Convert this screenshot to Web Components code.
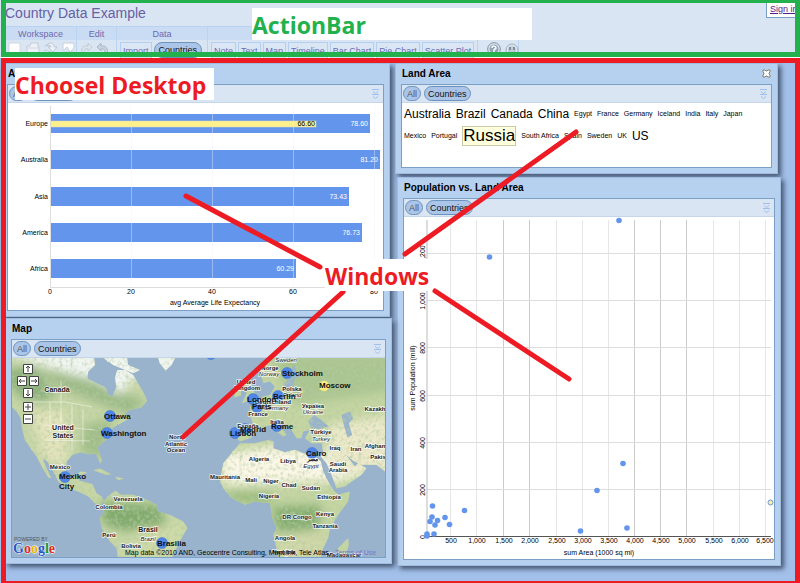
<!DOCTYPE html>
<html lang="en">
<head>
<meta charset="utf-8">
<title>Country Data Example</title>
<style>
html,body{height:100%}
body{margin:0;overflow:hidden;background:#fff;color:#000;font-family:"Liberation Sans",Arial,sans-serif;font-size:9px}
</style>
</head>
<body>
<choosel-app></choosel-app>
<script>
const define=(name,html,setup)=>{
  const t=document.createElement('template');
  t.innerHTML=html;
  customElements.define(name,class extends HTMLElement{
    constructor(){super();this.attachShadow({mode:'open'}).append(t.content.cloneNode(true));}
    connectedCallback(){if(setup&&!this.ready){this.ready=true;setup(this,this.shadowRoot);}}
  });
};

define('marked-region',`
<style>
:host{display:block;position:relative;overflow:hidden;--ink:#ed1c24}
.frame{position:absolute;inset:0 0 -3px 1px;border:5px solid var(--ink);pointer-events:none;z-index:5}
:host([cut=top]) .frame{inset:-2px 0 1px 1px}
</style><slot></slot><div class="frame"></div>`);

define('tool-button',`
<style>
:host{display:block}
button{display:block;font:inherit;color:#6b6bb5;background:#dbe6f5;border:1px solid #b5cff0;padding:0 2px;height:18px;line-height:14px;white-space:nowrap}
:host([pill]) button{border:1px solid #6c93bd;border-radius:9px;background:#abc5e8;color:#111;padding:0 4px;height:16px}
</style><button type="button"><slot></slot></button>`);

define('tool-group',`
<style>
:host{display:flex;flex-direction:column;border-right:1px solid #b9d3f3;box-sizing:border-box}
.head{background:#c9dcf4;height:14px;line-height:14px;text-align:center;color:#6f68ad;border-top:1px solid #b9d3f3;box-sizing:border-box}
.row{display:flex;align-items:flex-start;gap:2px;padding:2px 3px;height:17px;box-sizing:border-box}
:host([wide]) .row{gap:4px}
:host([plain]) .head{background:none;border-color:transparent}
:host([plain]) .row{padding-left:9px}
</style><div class="head"></div><div class="row"><slot></slot></div>`,(h,r)=>{r.querySelector('.head').textContent=h.getAttribute('label')||'';});

const icons={
 doc:'<path d="M1 1h11v14H1z" fill="#fff" stroke="#d0d8e2"/>',
 folder:'<path d="M1 4h3l1-3h7v4h1v8H1z" fill="#eef2f6" stroke="#c3ccd6"/><path d="M2 6h10" stroke="#cfd6de"/>',
 save:'<path d="M1 4l5-3c4 0 4 3 4 4h3L9 10 4 5h3c0-2-1-2-6-1zM1 8l11 4v2H1z" fill="#eef2f6" stroke="#bfc9d5"/>',
 saveas:'<path d="M1 1h11v5L8 10 5 5 1 9z" fill="#fafcfd" stroke="#c7d0da"/><path d="M2 10h11v4H2z" fill="#f4f7fa" stroke="#c7d0da"/>',
 redo:'<path d="M2 13C0 6 4 3 8 4V1l4 4-4 4V7C5 6 4 8 4 12z" fill="#dde4ec" stroke="#c1cbd7"/>',
 undo:'<path d="M11 13c2-7-2-10-6-9V1L1 5l4 4V7c3-1 4 1 4 5z" fill="#c9d2dd" stroke="#acb8c6"/>',
 help:'<circle cx="7" cy="7" r="6.300" fill="#e3eaf2" stroke="#7f8ea0"/><circle cx="7" cy="7" r="4.600" fill="#93a3b8"/><path d="M5 6c0-3 4-2 4 0 0 1-2 1-2 2v2" fill="none" stroke="#fff" stroke-width="1.500"/>',
 bug:'<circle cx="7" cy="8" r="6" fill="#dfe5ec" stroke="#a3afbd"/><circle cx="7" cy="8" r="4" fill="#c3ccd8"/><path d="M5 5v3M9 5v3M4 10q3 2 6 0" fill="none" stroke="#6d7a8b" stroke-width="1.500"/>',
 close:'<path d="M1 1h2l1 1h1l1-1h2v2L7 4v1l1 1v2H6L5 7H4L3 8H1V6l1-1V4L1 3z" fill="#fff" stroke="#81806f"/>',
 down:'<path d="M1 .5h7M2 2.500L4.500 4.500l2.500-2M1 5.500h7M2 7.500L4.500 9.500l2.500-2" fill="none" stroke="#9dbfec"/>'
};
define('tool-icon',`
<style>:host{display:block}button{display:block;padding:0;border:0;background:none;width:14px;height:15px}svg{display:block;width:14px;height:15px}
:host([small]) button,:host([small]) svg{width:9px;height:10px}</style><button type="button"></button>`,(h,r)=>{
  const b=r.querySelector('button'),s=h.hasAttribute('small');
  b.setAttribute('aria-label',h.getAttribute('name'));
  b.innerHTML='<svg viewBox="0 0 '+(s?'9 10':'14 15')+'">'+icons[h.getAttribute('name')]+'</svg>';
});

define('action-bar',`
<style>
:host{display:flex;flex-direction:column;background:#dae5f3;height:57px;position:relative;padding-left:5px;box-sizing:border-box}
h1{margin:0;font-size:14px;font-weight:400;line-height:26px;height:26px;color:#655fa5}
nav{display:flex}
.ws{width:72px}.ed{width:40px}.da{width:91px}.vi{width:270px}.he{width:41px}
.sign{position:absolute;right:0;top:0;height:18px;width:34px;box-sizing:border-box;border:1px solid #7b9dc2;background:#fff;padding-left:3px;line-height:17px;white-space:nowrap;overflow:hidden}
a{color:#551a8b}
</style>
<h1>Country Data Example</h1>
<nav>
<tool-group class="ws" wide label="Workspace"><tool-icon name="doc"></tool-icon><tool-icon name="folder"></tool-icon><tool-icon name="save"></tool-icon><tool-icon name="saveas"></tool-icon></tool-group>
<tool-group class="ed" label="Edit"><tool-icon name="redo"></tool-icon><tool-icon name="undo"></tool-icon></tool-group>
<tool-group class="da" label="Data"><tool-button>Import</tool-button><tool-button pill>Countries</tool-button></tool-group>
<tool-group class="vi" label=""><tool-button>Note</tool-button><tool-button>Text</tool-button><tool-button>Map</tool-button><tool-button>Timeline</tool-button><tool-button>Bar Chart</tool-button><tool-button>Pie Chart</tool-button><tool-button>Scatter Plot</tool-button></tool-group>
<tool-group class="he" wide plain><tool-icon name="help"></tool-icon><tool-icon name="bug"></tool-icon></tool-group>
</nav>
<div class="sign"><a href="#signin">Sign in</a></div>`);

define('desktop-window',`
<style>
:host{display:flex;flex-direction:column;position:absolute;box-sizing:border-box;padding:0 5px 5px 5px;background:#b6d0ef;box-shadow:0 0 0 1px #a0bce0,3px 3px 5px 1px #43546e}
header{display:flex;justify-content:space-between;align-items:center;height:20px;padding:0 1px}
h2{margin:0;font-size:10px;line-height:20px}
.box{flex:1;display:flex;flex-direction:column;border:1px solid #7c9fc6;min-height:0;background:#fff}
.bar{box-sizing:border-box;flex:none;display:flex;gap:3px;align-items:center;height:18px;background:#dae5f3;border-bottom:1px solid #c5d6ea;padding:0 3px 0 1px}
.bar button{font:inherit;line-height:12px;height:15px;padding:0 3px;border:1px solid #6c93bd;border-radius:8px;background:#abc5e8;color:#111}
.bar .all{color:#555}
.bar tool-icon{margin-left:auto}
.body{flex:1;min-height:0}
</style>
<header><h2></h2></header>
<div class="box"><div class="bar"><button type="button" class="all">All</button><button type="button">Countries</button><tool-icon small name="down"></tool-icon></div><div class="body"><slot></slot></div></div>`,(h,r)=>{
  r.querySelector('h2').textContent=h.getAttribute('heading');
  if(h.hasAttribute('closable')){const c=document.createElement('tool-icon');c.setAttribute('small','');c.setAttribute('name','close');r.querySelector('header').append(c);}
});

const svgStyle=`<style>:host{display:block;height:100%}svg{display:block;width:100%;height:100%}text{font-family:"Liberation Sans",Arial,sans-serif;font-size:7px}</style>`;

define('bar-chart',svgStyle+`<svg viewBox="8 103 375 207"></svg>`,(h,r)=>{
  const rows=[['Europe',114,370,'78.60'],['Australia',150,380,'81.20'],['Asia',187,349,'73.43'],['America',223,362,'76.73'],['Africa',259,296,'60.29']];
  let s='<path d="M50.500 106V287.500H382" fill="none" stroke="#ddd"/>';
  for(const [n,y,e] of rows)s+=`<rect x="51" y="${y}" width="${e-51}" height="19" fill="#6495ed"/><text x="48" y="${y+12}" text-anchor="end">${n}</text>`;
  s+='<path d="M131.500 106V287M212.500 106V287M293.500 106V287M374.500 106V287" stroke="#eef3fc" stroke-opacity=".4"/><rect x="51" y="121" width="265" height="6" fill="#fff08e" stroke="#d9dcae" stroke-width=".5"/>';
  for(const [n,y,e,v] of rows)s+=`<text x="${e-2}" y="${y+12}" text-anchor="end" fill="#fff">${v}</text>`;
  s+='<text x="315" y="126" text-anchor="end">66.60</text>';
  [0,20,40,60,80].forEach((v,i)=>s+=`<text x="${50+i*81}" y="294" text-anchor="middle">${v}</text>`);
  s+='<text x="215" y="305" text-anchor="middle">avg Average Life Expectancy</text>';
  r.querySelector('svg').innerHTML=s;
});

define('scatter-plot',svgStyle+`<svg viewBox="404 217 370 342"></svg>`,(h,r)=>{
  const xs=[450,476,503,529,556,582,608,634,660,686,713,739,765];
  let s='';
  xs.forEach((x,i)=>s+=`<path d="M${x}.500 220V536" stroke="${[2,3,7,8,9].includes(i)?'#ccc':'#e6e6e6'}"/><text x="${Math.min(x+1,765)}" y="543" text-anchor="middle">${((i+1)*500).toLocaleString('en-US')}</text>`);
  [[0,536],[200,489],[400,442],[600,395],[800,347],[1000,300],[1200,253]].forEach(([v,y])=>{
    if(v)s+=`<path d="M427 ${y}.500H771" stroke="#ddd"/>`;
    s+=`<text transform="translate(425 ${y+1}) rotate(-90)" text-anchor="middle">${v.toLocaleString('en-US')}</text>`;
  });
  s+='<path d="M427 220V536" stroke="#bbb"/><path d="M427 536.500H771" stroke="#555"/><text x="599" y="555" text-anchor="middle">sum Area (1000 sq mi)</text><text transform="translate(415 378) rotate(-90)" text-anchor="middle">sum Population (mill)</text>';
  for(const [x,y] of [[619,220.5],[489.5,257],[623,463.5],[597,490.5],[580.5,531],[627,528],[464.5,510.5],[445,517.5],[449.5,524.5],[432.5,506],[432,517],[430,521.5],[437.5,520.5],[435,525],[434,534],[427,534],[427,536]])s+=`<circle cx="${x}" cy="${y}" r="2.800" fill="#6495ed"/>`;
  s+='<circle cx="770.500" cy="502.500" r="2.500" fill="#fff08e" stroke="#6495ed"/>';
  r.querySelector('svg').innerHTML=s;
});

define('text-cloud',`
<style>
:host{display:flex;flex-wrap:wrap;align-items:center;align-content:flex-start;column-gap:5px;padding:1px 20px 0 2px;font-size:7px}
span{line-height:20px;white-space:nowrap}
.m{font-size:12px}
.l{font-size:17px;line-height:18px;background:#ffffde;border:1px solid #ccc9a8;margin:2px 0}
</style>`,(h,r)=>{
  for(const w of ['Australia','Brazil','Canada','China','Egypt','France','Germany','Iceland','India','Italy','Japan','Mexico','Portugal','Russia','South Africa','Spain','Sweden','UK','US']){
    const e=document.createElement('span');e.textContent=w;
    if(['Australia','Brazil','Canada','China','US'].includes(w))e.className='m';
    if(w==='Russia')e.className='l';
    r.append(e);
  }
});

define('world-map',svgStyle+`
<style>
:host{background:#99b3cc}
.c{font-size:6px;font-weight:700;paint-order:stroke;stroke:#fff;stroke-opacity:.8;stroke-width:1.500px;fill:#222;text-anchor:middle}
.i{font-style:italic;font-weight:400}
.big{font-size:7px}
.city{font-size:8px;font-weight:700;fill:#111}
a{fill:#7777cc}
</style>
<svg viewBox="12 358 373 199" preserveAspectRatio="xMidYMid slice">
<defs>
<filter id="coast" x="0" y="0" width="1" height="1"><feTurbulence type="fractalNoise" baseFrequency=".14" numOctaves="3" seed="4" result="n"/><feDisplacementMap in="SourceGraphic" in2="n" scale="5" xChannelSelector="R" yChannelSelector="G" result="d"/><feTurbulence type="fractalNoise" baseFrequency=".09" numOctaves="4" seed="9"/><feColorMatrix values="0 0 0 0 .45  0 0 0 0 .6  0 0 0 0 .36  1.800 0 0 0 -.8"/><feComposite in2="d" operator="in" result="t"/><feMerge><feMergeNode in="d"/><feMergeNode in="t"/></feMerge></filter>
<filter id="soft" x="-.3" y="-.3" width="1.600" height="1.600"><feGaussianBlur stdDeviation="14"/></filter>
<clipPath id="west"><path d="M20 110V262L50 290 62 310 66 340 75 375 95 405 110 425 125 455 145 488 154 490 140 460 128 430 142 440 160 470 175 500 200 520 235 530 265 545 285 565 300 572 312 560 305 545 290 535 278 508 250 500 238 498 240 482 264 472 240 470 226 488 208 488 198 470 200 440 218 420 245 412 265 418 288 415 300 445 307 440 298 412 292 398 305 385 325 370 328 350 345 335 370 322 398 305 372 300 388 285 425 278 442 258 432 235 400 180 375 165 352 165 345 190 350 215 338 245 322 238 318 218 290 205 262 190 265 170 285 150 280 110ZM298 120H380L385 150 420 165 400 175 340 150ZM472 120H530L515 150 497 167 480 145ZM280 466L300 461 335 478 318 480ZM345 485L372 492 355 496ZM312 558L335 535 348 528 362 540 400 540 430 550 470 570 475 590 510 600 550 620 563 640 545 670 530 700 510 740H355L350 700 330 680 305 640 300 610 312 590Z"/></clipPath>
<clipPath id="east"><path d="M235 110 195 165 205 205 225 200 240 215 225 240 205 245 185 262 165 275 165 300 175 330 125 325 120 360 135 380 165 370 185 350 210 335 232 330 245 350 265 365 275 360 255 335 260 320 290 345 305 370 320 370 325 350 345 345 330 370 350 385 380 385 385 410 378 425 395 445 410 480 425 520 450 515 500 480 515 460 490 445 480 455 452 418 475 438 500 450 545 450 571 470 590 470V110ZM135 385 180 385 220 375 237 380 235 400 270 412 300 405 325 415 360 425 378 440 385 470 400 500 415 525 430 540 465 530 460 560 430 600 405 640 400 670 385 700 375 740H250L245 700 235 660 245 640 232 610 228 585 225 565 180 560 150 570 110 550 85 520 75 500 80 470 85 445 110 415ZM150 185 165 190 175 225 190 250 160 258 140 265 155 235 145 210ZM120 220 138 218 138 242 118 248ZM460 670 462 690 448 740H425L430 700Z"/></clipPath>
</defs>
<rect x="0" y="340" width="400" height="230" fill="#99b3cc"/>
<g transform="translate(0 315) scale(.333)" filter="url(#coast)"><g clip-path="url(#west)">
<rect width="600" height="800" fill="#c8d6a6"/>
<g filter="url(#soft)"><path d="M0 170 100 150 170 240 130 260 60 250Z" fill="#8db07c"/><path d="M110 160 260 190 440 260 390 300 280 260 180 220Z" fill="#9cba86"/><path d="M0 110H600V180L400 190 360 240 300 200 120 150Z" fill="#f2f6f3"/><path d="M90 290 200 290 200 460 130 430Z" fill="#e3e3bb"/><path d="M250 330 340 310 300 440 240 410Z" fill="#a0bd87"/><path d="M300 560 480 570 500 630 380 650 310 630Z" fill="#82ab6d"/><path d="M400 650 560 620 540 730 400 730Z" fill="#cfdaa7"/></g></g></g>
<g transform="translate(195 315) scale(.333)" filter="url(#coast)"><g clip-path="url(#east)">
<rect width="640" height="800" fill="#c5d5a2"/>
<g filter="url(#soft)"><path d="M70 420 220 395 520 420 510 480 420 500 90 510Z" fill="#fbf7e6"/><path d="M400 330 590 300V480L400 460Z" fill="#ece9ca"/><path d="M220 110H590V230L300 270Z" fill="#abc591"/><path d="M235 575 380 570 370 660 240 650Z" fill="#86ad70"/><path d="M90 530 230 530 230 570 110 560Z" fill="#9aba7c"/><path d="M240 660 400 640 380 740 250 740Z" fill="#d0d8a9"/></g></g>
<path d="M340 320 358 300 375 312 402 335 375 342 350 340ZM440 300 465 290 475 310 462 325 472 360 458 368 448 335ZM268 205 285 190 290 160 300 150 305 175 320 182 300 190 290 225 265 228Z" fill="#99b3cc"/><circle cx="368" cy="603" r="7" fill="#99b3cc"/></g>
<g fill="none" stroke="#fff" stroke-opacity=".65" stroke-width=".7"><path d="M30 402 66 402 92 407M61 380V422M50 402V432M72 404V450M83 410V445M43 425 95 430M45 440 90 441"/></g>
<g id="dots" fill="#4f86e8" stroke="#356fd4" stroke-width=".5"></g>
<g id="labels"></g>
<text x="125" y="555">Map data ©2010 AND, Geocentre Consulting, MapLink, Tele Atlas - <a href="#terms">Terms of Use</a></text>
<text x="14" y="541" style="font-size:5px" fill="#555">POWERED BY</text>
<text x="13" y="553" style="font-family:'Liberation Serif',serif;font-size:14px;font-weight:700;paint-order:stroke;stroke:#fff;stroke-width:1px"><tspan fill="#2a56c6">G</tspan><tspan fill="#d62d20">o</tspan><tspan fill="#e8b400">o</tspan><tspan fill="#2a56c6">g</tspan><tspan fill="#129a3a">l</tspan><tspan fill="#d62d20">e</tspan></text>
<g fill="#fff" stroke="#444"><path d="M23.500 364.500h9v9h-9zM17.500 376.500h9v9h-9zM29.500 376.500h9v9h-9zM23.500 388.500h9v9h-9zM23.500 402.500h9v9h-9zM23.500 414.500h9v9h-9z"/><path fill="none" d="M28 372v-6m-2 2 2-2 2 2M25 381h-6m2-2-2 2 2 2M31 381h6m-2-2 2 2-2 2M28 390v6m-2-2 2 2 2-2M25 407h6m-3-3v6M25 419h6"/></g>
</svg>`,(h,r)=>{
  const c=[['Canada',57,392,2],['United',63,430,2],['States',63,438,2],['México',60,469],['Venezuela',128,501],['Colombia',109,509],['Perú',109,537],['Brasil',148,532,2],['Brazil',148,541,1],['Bolivia',131,548],['North',177,439],['Atlantic',176,446],['Ocean',176,452],['Sweden',286,362,1],['Norge',270,370],['Norway',269,376,1],['United',246,384],['Kingdom',247,390],['Polska',292,391],['Poland',292,397,1],['Deutschland',273,404],['Germany',276,410,1],['France',258,416],['España',248,428],['Україна',313,408],['Ukraine',313,414,1],['Türkiye',321,434],['Turkey',321,441,1],['Italia',277,424],['Iraq',335,450],['Iran',356,451],['Kazakh',375,411],['Afghan',375,448],['Pakis',378,459],['Algeria',259,461],['Libya',288,463],['مصر',312,461],['Egypt',311,468,1],['Saudi',338,466],['Arabia',338,472],['Mauritania',225,479],['Mali',251,482],['Niger',271,483],['Chad',289,487],['Sudan',311,490],['Nigeria',269,498],['Ethiopia',329,499],['DR Congo',297,519],['Kenya',325,516],['Tanzania',325,528],['Angola',285,540],['Namibia',284,554],['Botswana',299,561],['Madagascar',344,557]];
  r.querySelector('#labels').innerHTML=c.map(([t,x,y,k])=>`<text class="c ${k===1?'i':k===2?'big':''}" x="${x}" y="${y}">${t}</text>`).join('')+
  [['Ottawa',104,419],['Washington',101,436],['Mexiko',59,479],['City',59,489],['Brasilia',157,546],['Stockholm',282,376],['Moscow',319,388],['London',247,402],['Berlin',273,399],['Paris',252,409],['Madrid',240,432],['Lisbon',230,436],['Rome',271,429],['Cairo',306,456]].map(([t,x,y])=>`<text class="city" x="${x}" y="${y}">${t}</text>`).join('');
  r.querySelector('#dots').innerHTML=[[110,416],[107,433],[65,477],[162,543],[287,373],[253,399],[278,396],[257,407],[245,429],[235,433],[277,426],[312,453],[211,354]].map(([x,y])=>`<circle cx="${x}" cy="${y}" r="5.500"/>`).join('')+'<circle cx="324" cy="386" r="5" fill="#fdee7c" stroke="#f5e681"/>';
});

define('callout-label',`
<style>:host{display:block;position:absolute;background:#fff;font:700 23px/34px "Open Sans","Noto Sans",sans-serif;height:32px;white-space:nowrap;z-index:10}</style><slot></slot>`);

define('callout-lines',`
<style>:host{display:block;position:absolute;left:0;top:0;z-index:9;pointer-events:none}svg{display:block}</style>
<svg width="800" height="583"><path d="M186 196 320 267M343 292 183 437M576 132 405 254M435 291 569 379" fill="none" stroke="#ed1c24" stroke-width="5" stroke-linecap="round"/></svg>`);

define('choosel-app',`
<style>
:host{display:flex;flex-direction:column;height:100%;min-height:560px;position:relative;overflow:hidden}
.top{flex:none;--ink:#22b14c;height:58px}
.desk{flex:1;background:#a2c0ea}
.life{left:2px;top:6px;width:387px;height:252px}
.land{left:396px;top:6px;right:23px;height:109px}
.pop{left:398px;top:120px;right:20px;height:387px}
.map{left:6px;top:261px;width:385px;height:244px}
.a{left:252px;top:8px;width:280px;color:#22b14c}
.b{left:15px;top:68px;width:199px;color:#ed1c24}
.c{left:325px;top:259px;width:104px;color:#ed1c24}
</style>
<marked-region class="top" cut="top"><action-bar></action-bar></marked-region>
<marked-region class="desk">
<desktop-window class="life" heading="Average Life Expectancy"><bar-chart></bar-chart></desktop-window>
<desktop-window class="land" heading="Land Area" closable><text-cloud></text-cloud></desktop-window>
<desktop-window class="pop" heading="Population vs. Land Area"><scatter-plot></scatter-plot></desktop-window>
<desktop-window class="map" heading="Map"><world-map></world-map></desktop-window>
</marked-region>
<callout-lines></callout-lines>
<callout-label class="a">ActionBar</callout-label>
<callout-label class="b">Choosel Desktop</callout-label>
<callout-label class="c">Windows</callout-label>`);
</script>
</body>
</html>
